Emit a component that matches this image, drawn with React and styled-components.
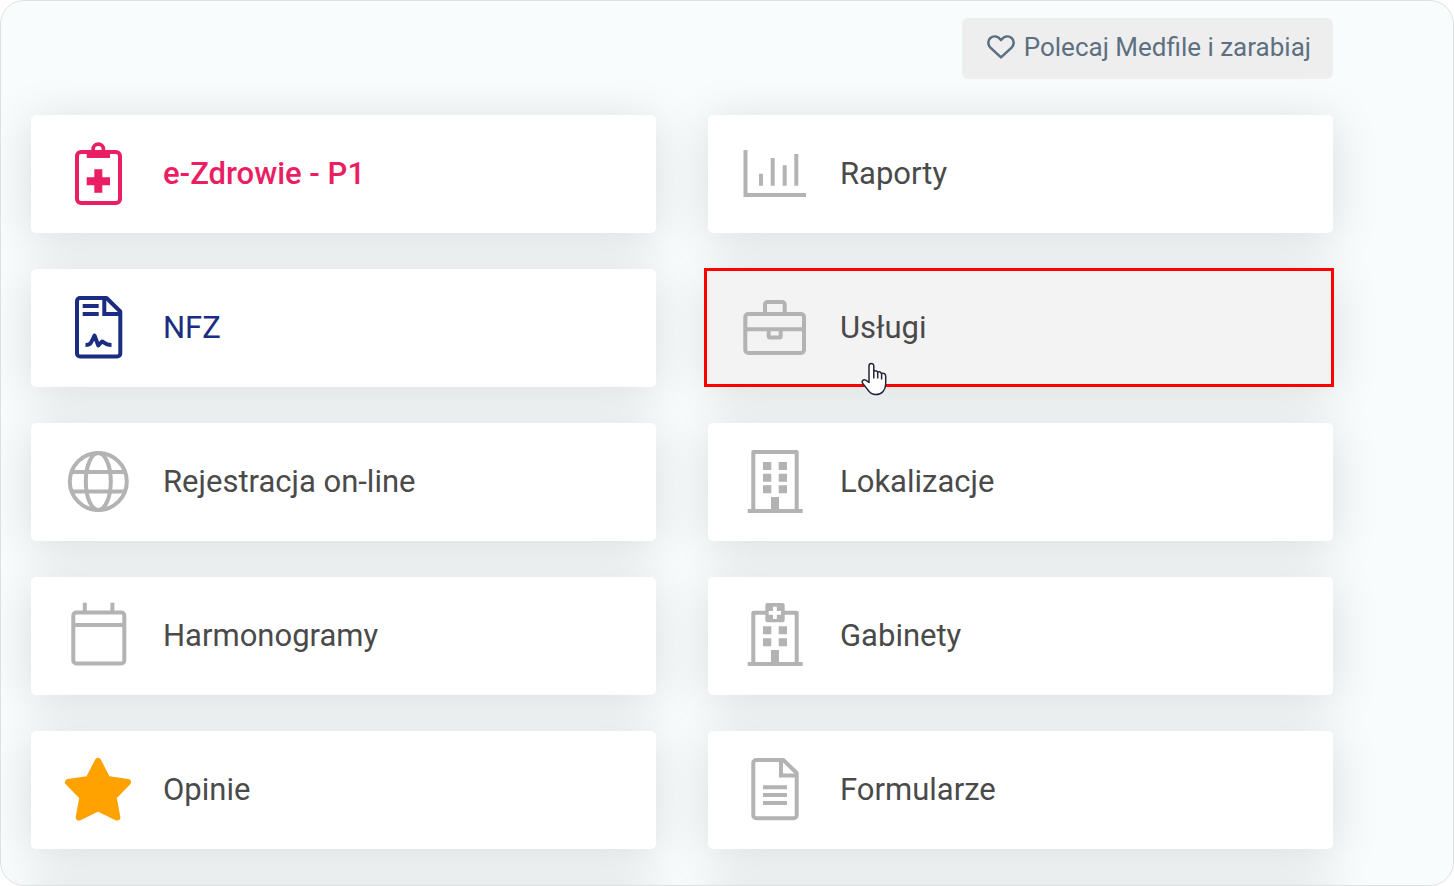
import React from "react";
import styled, { createGlobalStyle, css } from "styled-components";

const GlobalStyle = createGlobalStyle`
  *, *::before, *::after { box-sizing: border-box; }
  body {
    margin: 0;
    background: #ffffff;
    font-family: Roboto, "Liberation Sans", sans-serif;
    color: #4a4a4a;
  }
`;

const Page = styled.main`
  height: 100vh;
  overflow: hidden;
  padding: 17px 120px 0 30px;
  border: 1px solid #dfe1e1;
  border-radius: 24px;
  background: #f8fcfc;
`;

const Header = styled.header`
  display: flex;
  justify-content: flex-end;
  margin-bottom: 36px;
`;

const ReferButton = styled.button`
  display: flex;
  align-items: center;
  gap: 9px;
  height: 61px;
  padding: 0 22px 3px 25px;
  border: 0;
  border-radius: 6px;
  background: #eeeeee;
  color: #5d7081;
  font-family: inherit;
  font-size: 26px;
  line-height: 32px;
  white-space: nowrap;
  cursor: pointer;
`;

const Grid = styled.nav`
  display: grid;
  grid-template-columns: 1fr 1fr;
  grid-auto-rows: 118px;
  gap: 36px 52px;
`;

const highlight = css`
  background: #f3f3f3;
  &::before {
    content: "";
    position: absolute;
    inset: -1px -1px 0 -4px;
    border: 3px solid #ff0000;
    background: #f3f3f3;
  }
`;

const Tile = styled.a`
  position: relative;
  display: flex;
  align-items: center;
  gap: 29px;
  padding: 0 31px;
  border-radius: 5px;
  background: #ffffff;
  box-shadow: 0 6px 48px rgba(0, 6, 8, 0.13);
  color: ${(p) => p.$color || "#4a4a4a"};
  text-decoration: none;
  ${(p) => p.$active && highlight}
`;

const TileIcon = styled.svg`
  position: relative;
  flex: none;
  width: 72px;
  height: 72px;
  color: ${(p) => p.$color || "#b3b3b3"};
  fill: none;
  stroke: currentColor;
  stroke-width: 4;

  .solid {
    fill: currentColor;
    stroke: none;
  }
`;

const TileLabel = styled.span`
  position: relative;
  font-size: 31px;
  line-height: 40px;
  font-weight: ${(p) => (p.$strong ? 500 : 400)};
`;

const HandCursor = styled.svg`
  position: absolute;
  left: 153px;
  top: 93px;
  width: 26px;
  height: 34px;
`;

const ICONS = {
  clipboard: (
    <>
      <rect x="15" y="14" width="43" height="51" rx="4" />
      <circle cx="36.3" cy="11.3" r="5.2" strokeWidth="3.6" />
      <path className="solid" d="M24.7 13h6.6c1 2.400 2.800 3.400 5 3.400s4-1 5-3.400H48v7H24.700z" />
      <path className="solid" d="M32.300 31.300h8v8H48v8h-7.700v7.500h-8v-7.500h-7.600v-8h7.600z" />
    </>
  ),
  signedFile: (
    <>
      <path d="M18 6h26.500l13.800 13.500v42a3 3 0 0 1-3 3H18a3 3 0 0 1-3-3V9a3 3 0 0 1 3-3z" strokeLinejoin="round" />
      <path d="M42.300 6v16h16M20.700 14h16M20.700 22h16" />
      <path d="M23.500 53c5 0 5-1 9-9.500l3.800 10 3.700-4c2 0 2.500 3.500 9.500 3.500" strokeWidth="4" strokeLinejoin="round" />
    </>
  ),
  globe: (
    <>
      <circle cx="36.300" cy="35.500" r="28.500" />
      <ellipse cx="36.300" cy="35.500" rx="12.500" ry="28.500" />
      <path d="M9.500 26h53.600M9.500 45.500h53.600" />
    </>
  ),
  calendar: (
    <>
      <rect x="11.300" y="12.500" width="51" height="51" rx="3" />
      <path d="M11.300 25h51M22.800 2.700v9M50.400 2.700v9" />
    </>
  ),
  star: (
    <path
      d="M36 7.300l9.300 18 20.400 3L51.300 43 55 63.300 36 54l-19 9.300L20.700 43 6.300 28.300l20.400-3z"
      fill="currentColor"
      strokeWidth="6.600"
      strokeLinejoin="round"
    />
  ),
  chart: (
    <path d="M6.500 12v45H67M22 35.700v12M33.700 20v27.700M45.700 27.300v20.400M57.300 16v31.700" />
  ),
  briefcase: (
    <>
      <rect x="6.300" y="22" width="58.700" height="39" rx="3" />
      <path d="M26 22V12.500a2.500 2.500 0 0 1 2.500-2.500h14.700a2.500 2.500 0 0 1 2.500 2.500V22" />
      <path d="M6.300 37.300H65M29.700 38v6a1.500 1.500 0 0 0 1.500 1.500h9a1.500 1.500 0 0 0 1.500-1.500v-6" />
    </>
  ),
  building: (
    <>
      <path d="M14.300 65V6h43.400v59M8.700 65h55" strokeLinejoin="round" />
      <path className="solid" d="M24 16h8.300v8H24zM39.700 16H48v8h-8.300zM24 27.700h8.300v8H24zM39.700 27.700H48v8h-8.300zM24 39.300h8.300v8H24zM39.700 39.300H48v8h-8.300zM32 51h8v14h-8z" />
    </>
  ),
  clinic: (
    <>
      <path d="M14.300 64V12.700H28M44 12.700h13.700V64M8.700 64h55" strokeLinejoin="round" />
      <path
        className="solid"
        fillRule="evenodd"
        d="M28.300 3h15.400a2 2 0 0 1 2 2v15.300a2 2 0 0 1-2 2H28.300a2 2 0 0 1-2-2V5a2 2 0 0 1 2-2zM34 6.700V11h-4.300v3.700H34V19h3.800v-4.300H42V11h-4.200V6.700z"
      />
      <path className="solid" d="M24 26.300h8.300v8H24zM39.700 26.300H48v8h-8.300zM24 38.300h8.300v8H24zM39.700 38.300H48v8h-8.300zM32 50h8v14h-8z" />
    </>
  ),
  form: (
    <>
      <path d="M17.300 6h27l13.400 13v42.300a3 3 0 0 1-3 3H17.300a3 3 0 0 1-3-3V9a3 3 0 0 1 3-3z" strokeLinejoin="round" />
      <path d="M42 6v15.500h15.700M24 33.300h24M24 41h24M24 49h24" />
    </>
  ),
};

const TILES = [
  { label: "e-Zdrowie - P1", icon: "clipboard", color: "#e91e63", strong: true },
  { label: "Raporty", icon: "chart" },
  { label: "NFZ", icon: "signedFile", color: "#1a2d82" },
  { label: "Usługi", icon: "briefcase", active: true },
  { label: "Rejestracja on-line", icon: "globe" },
  { label: "Lokalizacje", icon: "building" },
  { label: "Harmonogramy", icon: "calendar" },
  { label: "Gabinety", icon: "clinic" },
  { label: "Opinie", icon: "star", iconColor: "#ffa200" },
  { label: "Formularze", icon: "form" },
];

function Pointer() {
  return (
    <HandCursor viewBox="0 0 26 34" aria-hidden="true">
      <path
        d="M8 20.500V4a2.400 2.400 0 0 1 4.800 0v5.200c1.500-.8 3.200-.4 3.900.9 1.500-.6 3-.1 3.700 1.200 2.200-.6 4.300.5 4.300 3v7.500c0 6-3.800 10.800-9.800 10.800-3.900 0-6.400-2-8.400-5.200L1.600 21.200c-1.300-2.300 1-4.300 3.200-3z"
        fill="#ffffff"
        stroke="#25253a"
        strokeWidth="1.500"
        strokeLinejoin="round"
      />
      <path d="M12.800 8.500v8M16.700 9.500v7M20.600 11v6.500" stroke="#25253a" strokeWidth="1.500" fill="none" />
    </HandCursor>
  );
}

export default function App() {
  return (
    <>
      <GlobalStyle />
      <Page>
        <Header>
          <ReferButton type="button">
            <svg width="28" height="24" viewBox="0 0 28 24" fill="none" stroke="currentColor" strokeWidth="2.600" strokeLinejoin="round" aria-hidden="true">
              <path d="M14 22.400L3.400 12.600C.6 9.800.6 5.200 3.400 2.900 6.600.4 10.800 1.200 14 5c3.200-3.800 7.400-4.600 10.600-2.100 2.800 2.300 2.800 6.900 0 9.700z" />
            </svg>
            Polecaj Medfile i zarabiaj
          </ReferButton>
        </Header>
        <Grid aria-label="Menu">
          {TILES.map((t) => (
            <Tile key={t.label} href="#" $color={t.color} $active={t.active}>
              <TileIcon viewBox="0 0 72 72" $color={t.iconColor || t.color} aria-hidden="true">
                {ICONS[t.icon]}
              </TileIcon>
              <TileLabel $strong={t.strong}>{t.label}</TileLabel>
              {t.active && <Pointer />}
            </Tile>
          ))}
          <Tile as="div" />
          <Tile as="div" />
        </Grid>
      </Page>
    </>
  );
}
